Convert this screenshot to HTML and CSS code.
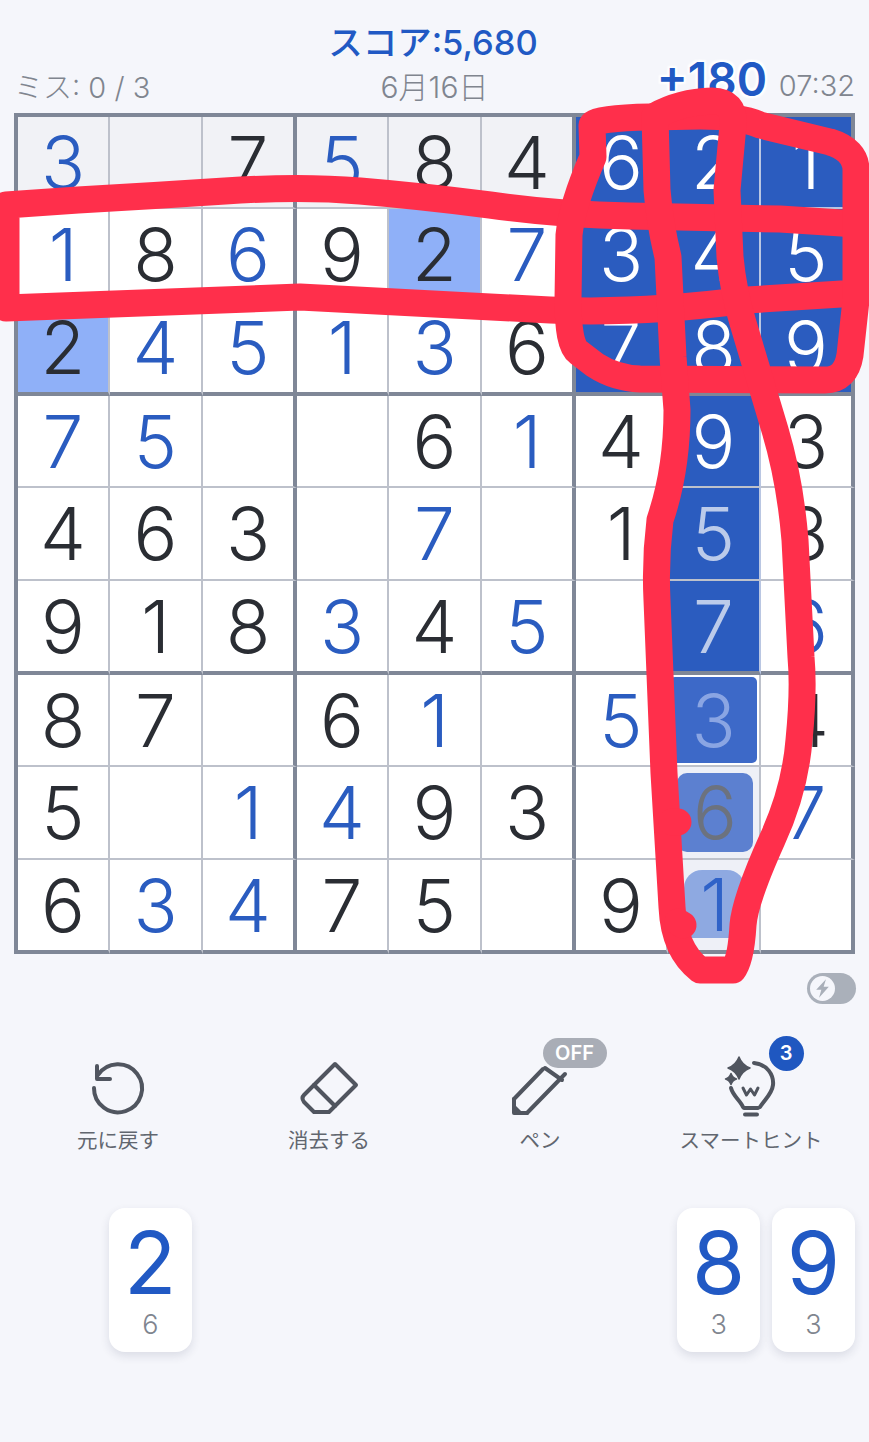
FILE: index.html
```html
<!DOCTYPE html>
<html lang="ja">
<head>
  <meta charset="UTF-8" />
  <meta name="viewport" content="width=device-width, initial-scale=1.0"/>
  <title>ナンプレ</title>
  <link rel="stylesheet" href="styles.css">
</head>
<body>

<div class="score">スコア:5,680</div>

<div class="status">
  <span class="misses">ミス: 0 / 3</span>
  <span class="date">6月16日</span>
  <span class="time">07:32</span>
  <span class="bonus">+180</span>
</div>

<div class="board">
  <!-- row 1 -->
  <div class="cell top u">3</div><div class="cell top"></div><div class="cell top">7</div>
  <div class="cell top u">5</div><div class="cell top">8</div><div class="cell top">4</div>
  <div class="cell on">6</div><div class="cell on">2</div><div class="cell on">1</div>
  <!-- row 2 -->
  <div class="cell u">1</div><div class="cell">8</div><div class="cell u">6</div>
  <div class="cell">9</div><div class="cell same">2</div><div class="cell u">7</div>
  <div class="cell on">3</div><div class="cell on">4</div><div class="cell on">5</div>
  <!-- row 3 -->
  <div class="cell same">2</div><div class="cell u">4</div><div class="cell u">5</div>
  <div class="cell u">1</div><div class="cell u">3</div><div class="cell">6</div>
  <div class="cell on">7</div><div class="cell on">8</div><div class="cell on">9</div>
  <!-- row 4 -->
  <div class="cell u">7</div><div class="cell u">5</div><div class="cell"></div>
  <div class="cell"></div><div class="cell">6</div><div class="cell u">1</div>
  <div class="cell">4</div><div class="cell on">9</div><div class="cell">3</div>
  <!-- row 5 -->
  <div class="cell">4</div><div class="cell">6</div><div class="cell">3</div>
  <div class="cell"></div><div class="cell u">7</div><div class="cell"></div>
  <div class="cell">1</div><div class="cell on dim">5</div><div class="cell">8</div>
  <!-- row 6 -->
  <div class="cell">9</div><div class="cell">1</div><div class="cell">8</div>
  <div class="cell u">3</div><div class="cell">4</div><div class="cell u">5</div>
  <div class="cell"></div><div class="cell on dim">7</div><div class="cell u">6</div>
  <!-- row 7 -->
  <div class="cell">8</div><div class="cell">7</div><div class="cell"></div>
  <div class="cell">6</div><div class="cell u">1</div><div class="cell"></div>
  <div class="cell u">5</div><div class="cell wave wave1"><span class="fill">3</span></div><div class="cell">4</div>
  <!-- row 8 -->
  <div class="cell">5</div><div class="cell"></div><div class="cell u">1</div>
  <div class="cell u">4</div><div class="cell">9</div><div class="cell">3</div>
  <div class="cell"></div><div class="cell wave wave2"><span class="fill">6</span></div><div class="cell u">7</div>
  <!-- row 9 -->
  <div class="cell">6</div><div class="cell u">3</div><div class="cell u">4</div>
  <div class="cell">7</div><div class="cell">5</div><div class="cell"></div>
  <div class="cell">9</div><div class="cell wave wave3"><span class="fill">1</span></div><div class="cell"></div>
</div>

<div class="toggle-row">
  <div class="toggle">
    <span class="knob">
      <svg viewBox="0 0 20 20" width="23" height="23"><path d="M13 2 L4.5 11 H9 L7 18 L15.5 8.5 H11 Z" fill="#a9afb9"/></svg>
    </span>
  </div>
</div>

<div class="tools">
  <div class="tool">
    <svg class="icon" viewBox="0 0 60 60">
      <path d="M10 17 A24 24 0 1 1 6 30"/>
      <path d="M9 8 V21 H22"/>
    </svg>
    <div class="tool-label">元に戻す</div>
  </div>
  <div class="tool">
    <svg class="icon" viewBox="0 0 60 60">
      <path d="M36 6 L57 27 L30 54 H15 L5 44 Q2 40 5 37 Z"/>
      <path d="M15 27 L36 48"/>
    </svg>
    <div class="tool-label">消去する</div>
  </div>
  <div class="tool">
    <svg class="icon" viewBox="0 0 60 60">
      <path d="M4 41 L33 11"/>
      <path d="M17 55 L55 16"/>
      <path d="M35 10 L52 22"/>
      <path d="M4 41 V55 H17"/>
      <path d="M4 47 V55 H12 Z" class="solid"/>
    </svg>
    <span class="off">OFF</span>
    <div class="tool-label">ペン</div>
  </div>
  <div class="tool">
    <svg class="icon" viewBox="0 0 60 60">
      <path d="M33 5 C46 6 53 17 52 27 C51 36 44 41 39 49"/>
      <path d="M10 30 C12 38 19 42 22 49"/>
      <path d="M22 30 L25.5 37 L29.5 31 L33.5 37 L37 30" class="thin"/>
      <path d="M23 50 H37"/>
      <path d="M24 56.5 H36"/>
      <path d="M18 -1 Q21 7 29 10 Q21 13 18 21 Q15 13 7 10 Q15 7 18 -1 Z" class="solid"/>
      <path d="M10 15.5 Q11.5 20 15.5 21 Q11.5 22 10 26.5 Q8.5 22 4.5 21 Q8.5 20 10 15.5 Z" class="solid"/>
    </svg>
    <span class="hints">3</span>
    <div class="tool-label">スマートヒント</div>
  </div>
</div>

<div class="numpad">
  <div></div>
  <div class="key"><div class="key-num">2</div><div class="key-left">6</div></div>
  <div></div><div></div><div></div><div></div><div></div>
  <div class="key"><div class="key-num">8</div><div class="key-left">3</div></div>
  <div class="key"><div class="key-num">9</div><div class="key-left">3</div></div>
</div>

<!-- red marker scribble on top of the screenshot -->
<svg class="scribble" viewBox="0 0 869 1442">
  <path d="M6 205 L78 200 Q150 196 225 191 Q300 186 360 191 Q420 196 490 205 Q560 215 630 216 L780 219 L857 224 L857 293 L747 300 Q640 314 550 310 Q420 303 300 297 Q150 303 6 308 Z"/>
  <path d="M592 125 Q596 118 650 117 L700 116 Q740 116 760 125 L830 142 Q856 150 856 170 L856 300 L850 355 Q846 380 825 380 L640 379 Q615 378 595 365 L578 352 Q568 345 568 300 L569 235 Q572 205 593 157 Z"/>
  <path d="M655 116 L657 190 Q660 225 668 257 L673 357 L677 410 Q677 470 660 520 Q655 560 657 600 L664 773 L672 907 Q674 950 700 970 L733 970 Q741 960 743 925 Q745 900 772 840 Q795 790 799 740 Q804 690 801 657 L795 540 Q790 480 775 430 L743 323 Q733 290 730 257 L727 190 L733 125 Q735 101 712 101 Q680 102 655 116"/>
  <path d="M672 822 L678 822 M678 922 L683 925"/>
</svg>

</body>
</html>
```

FILE: styles.css
```css
* { box-sizing: border-box; }
body {
  position: relative;
  margin: 0;
  height: 1442px;
  overflow: hidden;
  font-family: Inter, 'Noto Sans CJK JP', sans-serif;
  background: #f5f6fb;
  color: #2a2d33;
}

.score {
  padding: 22px 3px 0 0;
  font-size: 34.5px;
  line-height: 42px;
  font-weight: 500;
  text-align: center;
  color: #2159c4;
}

.status {
  position: relative;
  display: grid;
  grid-template-columns: 1fr auto 1fr;
  align-items: center;
  height: 34px;
  margin: -1px 14px 0;
  font-size: 29px;
  font-weight: 300;
  color: #80858f;
}

.time { text-align: right; }
.date { font-size: 30px; }

.bonus {
  position: absolute;
  top: -6px;
  right: 88px;
  font-size: 46px;
  line-height: 44px;
  font-weight: 600;
  color: #2159c4;
  text-shadow: 0 0 3px #fff, 2px 2px 2px #fff, -2px -2px 2px #fff, 2px -2px 2px #fff, -2px 2px 2px #fff;
}

/* the last column and row carry the right and bottom edge themselves */
.board {
  display: grid;
  grid-template-columns: repeat(3, 92px 93px 94px);
  grid-template-rows: repeat(3, 92px 93px 94px);
  width: 841px;
  margin: 16px 14px 0;
  border-top: 4px solid #7f8797;
  border-left: 4px solid #7f8797;
  background: #fff;
}

.cell {
  display: flex;
  align-items: center;
  justify-content: center;
  border-right: 2px solid #bdc1cb;
  border-bottom: 2px solid #bdc1cb;
  font-size: 73px;
  font-weight: 300;
  line-height: 1;
}

.cell:nth-child(3n) { border-right: 4px solid #7f8797; }
.cell:nth-child(n+19):nth-child(-n+27),
.cell:nth-child(n+46):nth-child(-n+54),
.cell:nth-child(n+73) { border-bottom: 4px solid #7f8797; }

.u { color: #2a5cc0; }
.top { background: #f1f2f6; }
.same { background: #8fb0f8; }
.on { background: #2b5cbf; color: #fff; }
.cell.on:not(:nth-child(3n)) { border-right-color: #b9c6e2; }
.cell.on:nth-child(-n+18) { border-bottom-color: #b9c6e2; }
.dim { color: #bccbea; }

.wave { padding: 2px; }
.fill {
  display: flex;
  flex: 1;
  align-self: stretch;
  align-items: center;
  justify-content: center;
  border-radius: 5px;
}
.wave1 .fill { background: #3d69c8; color: #8aa5e3; }
.wave2 { padding: 6px 6px 6px 9px; background: #eef0f7; }
.wave2 .fill { background: #5c80d0; color: #6c727e; border-radius: 10px; }
.wave3 { padding: 10px 14px 12px 16px; background: #eef0f7; }
.wave3 .fill { background: #8ea9e1; color: #2f62c8; border-radius: 18px 18px 4px 4px; }

.toggle-row {
  display: flex;
  justify-content: flex-end;
  margin-top: 19px;
  padding-right: 13px;
}

.toggle {
  width: 49px;
  height: 31px;
  padding: 3px;
  border-radius: 16px;
  background: #aab0ba;
}

.knob {
  display: flex;
  align-items: center;
  justify-content: center;
  width: 25px;
  height: 25px;
  border-radius: 50%;
  background: #f5f6fb;
}

.tools {
  display: grid;
  grid-template-columns: repeat(4, 211px);
  justify-content: center;
  margin-top: 54px;
}

.tool {
  position: relative;
  display: flex;
  flex-direction: column;
  align-items: center;
}

.icon {
  width: 60px;
  height: 60px;
  overflow: visible;
  fill: none;
  stroke: #50555f;
  stroke-width: 4;
  stroke-linecap: round;
  stroke-linejoin: round;
}
.icon .solid { fill: #50555f; stroke-width: 1.5; }
.icon .thin { stroke-width: 3; }

.tool-label {
  margin-top: 10px;
  font-size: 20.5px;
  line-height: 26px;
  color: #61666f;
}

.off {
  position: absolute;
  top: -20px;
  left: 108px;
  width: 64px;
  height: 30px;
  border-radius: 15px;
  background: #a9adb6;
  color: #fff;
  font-size: 20px;
  font-weight: 600;
  line-height: 30px;
  text-align: center;
}

.hints {
  position: absolute;
  top: -22px;
  left: 123px;
  width: 35px;
  height: 35px;
  border-radius: 50%;
  background: #1f57c0;
  color: #fff;
  font-size: 20px;
  font-weight: 600;
  line-height: 35px;
  text-align: center;
}

.numpad {
  display: grid;
  grid-template-columns: repeat(9, 1fr);
  column-gap: 11.6px;
  margin: 54px 14px 0;
}

.key {
  height: 144px;
  padding-top: 13px;
  border-radius: 16px;
  background: #fff;
  box-shadow: 0 4px 10px rgba(30, 40, 70, 0.12);
  text-align: center;
}

.key-num {
  font-size: 86px;
  line-height: 84px;
  color: #2159c4;
}

.key-left {
  margin-top: 3px;
  font-size: 27px;
  font-weight: 300;
  line-height: 34px;
  color: #80858f;
}

.scribble {
  position: absolute;
  top: 0;
  left: 0;
  width: 869px;
  height: 1442px;
  fill: none;
  stroke: #ff2f4b;
  stroke-width: 27;
  stroke-linecap: round;
  stroke-linejoin: round;
  pointer-events: none;
}
```
